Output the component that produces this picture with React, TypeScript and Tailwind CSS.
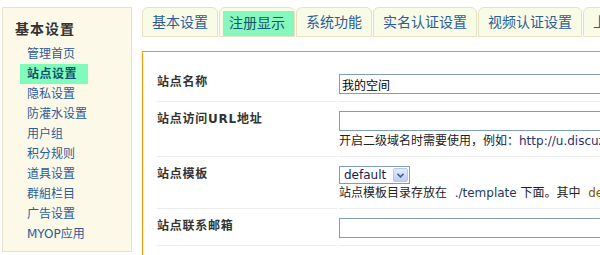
import React from 'react';

const menu = ['管理首页', '站点设置', '隐私设置', '防灌水设置', '用户组', '积分规则', '道具设置', '群組栏目', '广告设置', 'MYOP应用'];
const tabs = ['基本设置', '注册显示', '系统功能', '实名认证设置', '视频认证设置', '上传设置'];

const Row: React.FC<{ label: React.ReactNode; children: React.ReactNode }> = ({ label, children }) => (
  <>
    <div className="pt-[9px] pb-[7px] border-b border-[#ececec] text-[12px] leading-[16px] font-bold text-[#333] tracking-[0.75px]">
      {label}
    </div>
    <div className="pt-[9px] pb-[7px] border-b border-[#ececec] text-[12px] leading-[16px] text-[#222]">
      {children}
    </div>
  </>
);

const TextBox: React.FC<{ value?: string }> = ({ value = '' }) => (
  <input
    readOnly
    value={value}
    className="block h-[20px] w-[340px] border border-[#7f9db9] px-[2px] text-[12px] text-black outline-none bg-white"
  />
);

const App: React.FC = () => {
  return (
    <div className="w-[600px] h-[255px] overflow-hidden bg-white flex items-start whitespace-nowrap font-['DejaVu_Sans','Noto_Sans_CJK_SC',sans-serif]">
      {/* Sidebar */}
      <aside className="ml-[2px] mt-[7px] w-[130px] h-[245px] shrink-0 border border-[#e8e3c6] bg-[#fcf9e8]">
        <h2 className="pl-[12px] pt-[11px] text-[14px] leading-[20px] font-bold text-[#333] tracking-[1px]">基本设置</h2>
        <ul className="mt-[5px] ml-[17px]">
          {menu.map(m => (
            <li
              key={m}
              className={`w-[68px] h-[20px] px-[7px] text-[12px] leading-[20px] ${
                m === '站点设置' ? 'bg-[#80fbbb] font-bold text-[#0f5270] tracking-[0.5px]' : 'text-[#2b5b9c]'
              }`}
            >
              {m}
            </li>
          ))}
        </ul>
      </aside>

      {/* Main */}
      <main className="ml-[10px] shrink-0">
        <div className="mt-[7px] flex gap-[1px]">
          {tabs.map(t =>
            t === '注册显示' ? (
              <div key={t} className="h-[30px] border border-[#e6e2c3] rounded-t-[6px] bg-[#f8fce6] pl-[3px] pt-[3px] overflow-hidden">
                <span className="block h-full bg-[#86f7bd] pl-[6px] pr-[9px] text-[14px] leading-[24px] text-[#14566f]">{t}</span>
              </div>
            ) : (
              <div key={t} className="h-[30px] border border-[#e6e2c3] rounded-t-[6px] bg-[#f8fce6] px-[9px] text-[14px] leading-[28px] text-[#2b5b9c]">
                {t}
              </div>
            )
          )}
        </div>

        <div className="mt-[14px] w-[700px] h-[300px] border border-[#ff9600] pl-[14px] pt-[13px]">
          <div className="grid grid-cols-[180px_440px] gap-x-[2px]">
            <Row label="站点名称">
              <TextBox value="我的空间" />
            </Row>
            <Row label="站点访问URL地址">
              <TextBox />
              <div className="mt-[2px]">
                开启二级域名时需要使用，例如：<span className="text-[#2e2f6e]">http://u.discuz.net/</span>
              </div>
            </Row>
            <Row label="站点模板">
              <div className="flex items-center h-[18px] w-[71px] border border-[#7f9db9] bg-white">
                <span className="flex-1 pl-[4px] text-[12px] leading-[16px] text-[#1b1b4a]">default</span>
                <span className="mr-[1px] flex items-center justify-center w-[15px] h-[14px] rounded-[2px] border border-[#b5c8f0] bg-gradient-to-b from-[#e3ebfd] to-[#bccdf7]">
                  <svg width="7" height="5" viewBox="0 0 7 5">
                    <path d="M0.5 0.8 L3.5 3.8 L6.5 0.8" fill="none" stroke="#4d6185" strokeWidth="1.6" />
                  </svg>
                </span>
              </div>
              <div className="mt-[1px] whitespace-pre">
                站点模板目录存放在  <span className="text-[#1e3a5c]">./template</span> 下面。其中  <span className="text-[#7a5a00]">default</span> 为默认模板
              </div>
            </Row>
            <Row label="站点联系邮箱">
              <TextBox />
            </Row>
          </div>
        </div>
      </main>
    </div>
  );
};

export default App;
